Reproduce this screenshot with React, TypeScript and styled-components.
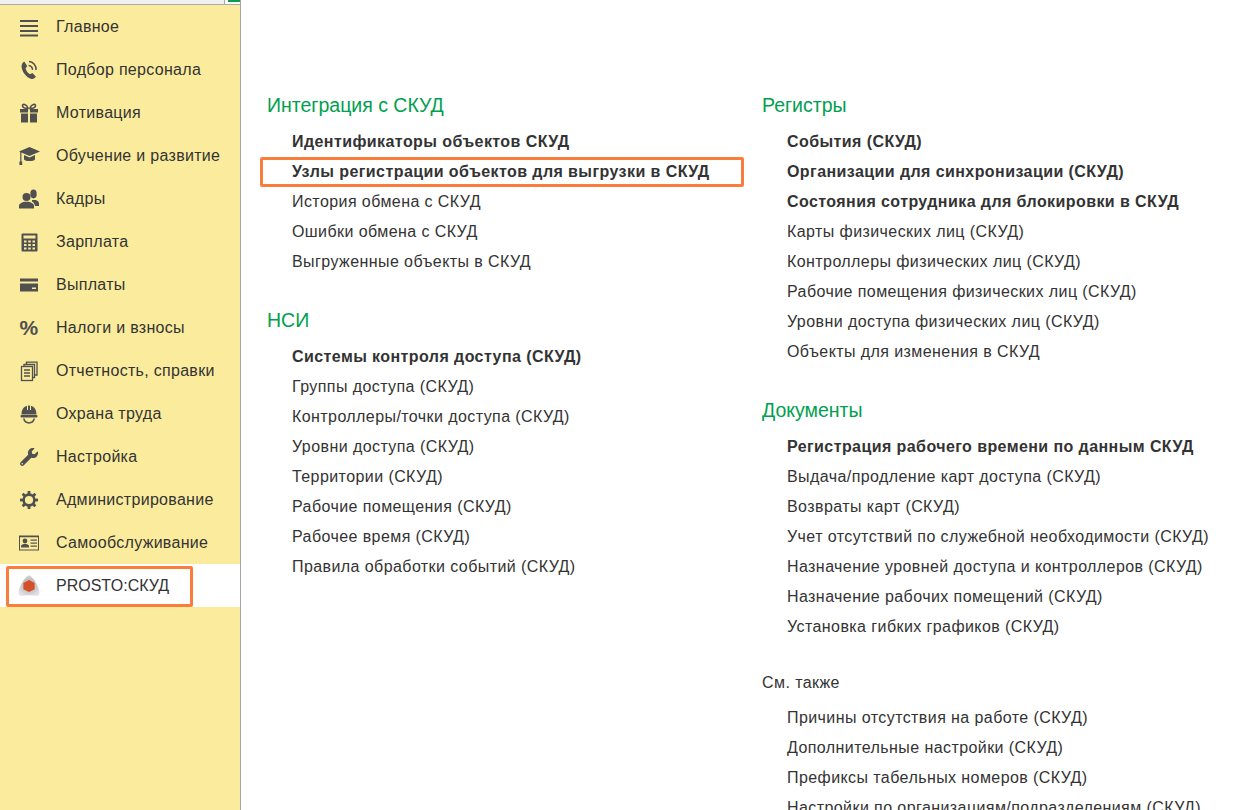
import React from 'react';
import styled, { createGlobalStyle } from 'styled-components';
import { FaWrench } from 'react-icons/fa';

const GlobalStyle = createGlobalStyle`
  html, body {
    margin: 0;
    padding: 0;
    height: 100%;
    overflow: hidden;
    background: #fff;
  }
  body {
    font-family: "Liberation Sans", Arial, sans-serif;
    font-size: 16px;
    color: #333;
  }
`;

const Page = styled.div`
  display: flex;
  width: 1257px;
  height: 810px;
  overflow: hidden;
`;

const Sidebar = styled.nav`
  flex: none;
  width: 240px;
  display: flex;
  flex-direction: column;
  background: #fbec9d;
  border-right: 1px solid #a4a4a4;
`;

const TabStrip = styled.div`
  flex: none;
  height: 4px;
  display: flex;
  border-bottom: 1px solid #a9a9a9;
`;

const TabFill = styled.div`
  flex: 1;
  background: #f0f0f0;
  border-right: 1px solid #a9a9a9;
`;

const TabCorner = styled.div`
  flex: none;
  width: 15px;
  background: #fff;
  display: flex;
  justify-content: flex-end;
`;

const TabMark = styled.div`
  width: 12px;
  height: 2px;
  background: #0d9b4d;
`;

const NavRow = styled.div<{ $active?: boolean }>`
  position: relative;
  height: 43px;
  display: flex;
  align-items: center;
  gap: 15px;
  padding-left: 17px;
  letter-spacing: ${(p) => (p.$active ? 0 : 0.3)}px;
  background: ${(p) => (p.$active ? '#fff' : 'transparent')};
  white-space: nowrap;
`;

const NavIcon = styled.svg`
  flex: none;
  width: 24px;
  height: 24px;
  fill: #505050;
`;

const PackIcon = styled.span`
  flex: none;
  width: 24px;
  height: 24px;
  display: flex;
  align-items: center;
  justify-content: center;
  color: #505050;
  font-size: 18px;
`;

const ActiveFrame = styled.div`
  position: absolute;
  left: 6px;
  top: 2px;
  width: 187px;
  height: 41px;
  box-sizing: border-box;
  border: 3px solid #fb7d3c;
  border-radius: 2px;
`;

const Main = styled.main`
  flex: 1;
  display: flex;
  padding: 90px 0 0 26px;
  min-width: 0;
`;

const Column = styled.div<{ $width: number }>`
  flex: none;
  width: ${(p) => p.$width}px;
`;

const Section = styled.section<{ $tight?: boolean }>`
  margin-bottom: ${(p) => (p.$tight ? 26 : 28)}px;
`;

const SectionTitle = styled.h2`
  margin: 0 0 7px;
  font-size: 19.5px;
  font-weight: 400;
  line-height: 30px;
  color: #00a04f;
`;

const SeeAlsoTitle = styled.h3`
  margin: 0 0 5px;
  font-size: 16px;
  font-weight: 400;
  line-height: 30px;
  letter-spacing: 0.42px;
  color: #333;
`;

const LinkRow = styled.div<{ $bold?: boolean }>`
  position: relative;
  height: 30px;
  line-height: 30px;
  padding-left: 25px;
  letter-spacing: 0.42px;
  font-weight: ${(p) => (p.$bold ? 700 : 400)};
  white-space: nowrap;
`;

const LinkFrame = styled.div`
  position: absolute;
  left: -7px;
  top: 0;
  width: 484px;
  height: 30px;
  box-sizing: border-box;
  border: 3px solid #fb7d3c;
  border-radius: 2px;
`;

type LinkItem = { text: string; bold?: boolean; framed?: boolean };

const MenuIcon = () => (
  <NavIcon viewBox="0 0 24 24">
    <rect x="3" y="5" width="18" height="2" />
    <rect x="3" y="10" width="18" height="2" />
    <rect x="3" y="15" width="18" height="2" />
    <rect x="3" y="19.5" width="18" height="2" />
  </NavIcon>
);

const PhoneIcon = () => (
  <NavIcon viewBox="0 0 24 24">
    <path d="M7.2 3.6 10.2 8 8.6 10.4C9.2 12.8 11 15.2 13 16.2L15.4 15 18.8 18.6C17.8 20.8 15.8 21.6 13.8 20.8 9 19 5.2 14 4.6 9 4.4 6.8 5.4 4.8 7.2 3.6Z" />
    <path d="M12 3.6A7.6 7.6 0 0 1 19 12" fill="none" stroke="#505050" strokeWidth="1.5" />
    <path d="M11.6 7.4A4 4 0 0 1 15.4 11.8" fill="none" stroke="#505050" strokeWidth="1.5" />
  </NavIcon>
);

const GiftIcon = () => (
  <NavIcon viewBox="0 0 24 24">
    <path d="M11 7.5C8 7.5 5.5 6.5 5.5 4.5 5.5 2.5 9.5 3 11 7ZM13 7.5C16 7.5 18.5 6.5 18.5 4.5 18.5 2.5 14.5 3 13 7Z" fill="none" stroke="#505050" strokeWidth="1.6" />
    <rect x="3" y="8" width="8" height="3.5" />
    <rect x="13" y="8" width="8" height="3.5" />
    <rect x="4" y="12.5" width="7" height="9" />
    <rect x="13" y="12.5" width="7" height="9" />
  </NavIcon>
);

const CapIcon = () => (
  <NavIcon viewBox="0 0 24 24">
    <path d="M12.5 3 23 7.5 12.5 12 2 7.5Z" />
    <path d="M7 11 12.5 13.4 18 11V15.5C16.5 17.5 8.5 17.5 7 15.5Z" />
    <rect x="3.2" y="8" width="1.2" height="10" />
    <rect x="2.4" y="17.5" width="2.8" height="3.5" />
  </NavIcon>
);

const PeopleIcon = () => (
  <NavIcon viewBox="0 0 24 24">
    <circle cx="9.5" cy="10" r="4" />
    <path d="M2 21.5V19C2 16.5 5 15.5 7.5 14.8H11.5C14 15.5 17 16.5 17 19V21.5Z" />
    <ellipse cx="16.5" cy="7" rx="3.2" ry="4.4" />
    <path d="M15 13H18.5C20.5 13.6 22 14.8 22 16.5V19H18C17.8 17 16.5 15 15 14.4Z" />
  </NavIcon>
);

const CalculatorIcon = () => (
  <NavIcon viewBox="0 0 24 24">
    <path fillRule="evenodd" d="M5.5 3.5H19.5A1 1 0 0 1 20.5 4.5V20.5A1 1 0 0 1 19.5 21.5H5.5A1 1 0 0 1 4.5 20.5V4.5A1 1 0 0 1 5.5 3.5ZM6.5 5.5V8.5H18.5V5.5ZM7 10.5V12.5H9.5V10.5ZM11.2 10.5V12.5H13.8V10.5ZM15.5 10.5V12.5H18V10.5ZM7 14V16H9.5V14ZM11.2 14V16H13.8V14ZM15.5 14V16H18V14ZM7 17.5V19.5H9.5V17.5ZM11.2 17.5V19.5H13.8V17.5ZM15.5 17.5V19.5H18V17.5Z" />
  </NavIcon>
);

const CardIcon = () => (
  <NavIcon viewBox="0 0 24 24">
    <path fillRule="evenodd" d="M3 5.5H21V8.5H3ZM3 10.5H21V18.5H3ZM15 14.5V16H19V14.5Z" />
  </NavIcon>
);

const PercentIcon = () => (
  <NavIcon viewBox="0 0 24 24">
    <text x="12" y="19" textAnchor="middle" fontSize="21" fontWeight="700" fontFamily="Liberation Sans, sans-serif">%</text>
  </NavIcon>
);

const PagesIcon = () => (
  <NavIcon viewBox="0 0 24 24">
    <g fill="none" stroke="#505050" strokeWidth="1.3">
      <rect x="4.5" y="7.5" width="11" height="14" />
      <path d="M7 7V5.5H17.5V18.5H16" />
      <path d="M9.5 5V3.2H20V16H18" />
      <path d="M7 11H13M7 14H13M7 17H13" />
    </g>
  </NavIcon>
);

const HelmetIcon = () => (
  <NavIcon viewBox="0 0 24 24">
    <path d="M4.5 12.5C4.5 7.5 7 4.6 10 3.8V8H11V3.4H13V8H14V3.8C17 4.6 19.5 7.5 19.5 12.5Z" />
    <rect x="3.5" y="13" width="17" height="2.6" rx="1" />
    <path d="M6 16.6C6.5 20 9 21.8 12 21.8 15 21.8 17.5 20 18 16.6H16.4C16 18.8 14.2 20.2 12 20.2 9.8 20.2 8 18.8 7.6 16.6Z" />
  </NavIcon>
);

const gearTeeth = [0, 45, 90, 135, 180, 225, 270, 315];

const GearIcon = () => (
  <NavIcon viewBox="0 0 24 24">
    <circle cx="12" cy="12" r="5.4" fill="none" stroke="#505050" strokeWidth="2.6" />
    {gearTeeth.map((angle) => (
      <rect key={angle} x="10.6" y="3" width="2.8" height="3.6" transform={`rotate(${angle} 12 12)`} />
    ))}
  </NavIcon>
);

const BadgeIcon = () => (
  <NavIcon viewBox="0 0 24 24">
    <path fillRule="evenodd" d="M2 4.5H22V19.5H2ZM3 6.2V18.5H21V6.2Z" />
    <circle cx="8" cy="10" r="2.4" />
    <path d="M4 16.5V15C4 13.6 6.5 13 8 13 9.5 13 12 13.6 12 15V16.5Z" />
    <rect x="13.5" y="8.5" width="6.5" height="1.2" />
    <rect x="13.5" y="11.5" width="6.5" height="1.2" />
    <rect x="13.5" y="14.5" width="6.5" height="1.2" />
  </NavIcon>
);

const ProstoIcon = () => (
  <NavIcon viewBox="0 0 24 24">
    <defs>
      <radialGradient id="prostoShell" cx="0.5" cy="0.45" r="0.6">
        <stop offset="0.4" stopColor="#bdbdbd" />
        <stop offset="1" stopColor="#e4e4e4" />
      </radialGradient>
      <filter id="prostoSoft">
        <feGaussianBlur stdDeviation="0.3" />
      </filter>
    </defs>
    <path d="M12 1.5C15 1.5 20.5 9.5 22.5 17.5 23 20.5 21.5 22 19.5 22 15 21 9 21 4.5 22 2.5 22 1 20.5 1.5 17.5 3.5 9.5 9 1.5 12 1.5Z" fill="url(#prostoShell)" filter="url(#prostoSoft)" />
    <path d="M12 6 17.6 9V15.2L12 18 6.4 15.2V9Z" fill="#d5502a" filter="url(#prostoSoft)" />
  </NavIcon>
);

const PackWrench = () => (
  <PackIcon>
    <FaWrench />
  </PackIcon>
);

const navItems: { label: string; Icon: React.ComponentType }[] = [
  { label: 'Главное', Icon: MenuIcon },
  { label: 'Подбор персонала', Icon: PhoneIcon },
  { label: 'Мотивация', Icon: GiftIcon },
  { label: 'Обучение и развитие', Icon: CapIcon },
  { label: 'Кадры', Icon: PeopleIcon },
  { label: 'Зарплата', Icon: CalculatorIcon },
  { label: 'Выплаты', Icon: CardIcon },
  { label: 'Налоги и взносы', Icon: PercentIcon },
  { label: 'Отчетность, справки', Icon: PagesIcon },
  { label: 'Охрана труда', Icon: HelmetIcon },
  { label: 'Настройка', Icon: PackWrench },
  { label: 'Администрирование', Icon: GearIcon },
  { label: 'Самообслуживание', Icon: BadgeIcon },
];

const integration: LinkItem[] = [
  { text: 'Идентификаторы объектов СКУД', bold: true },
  { text: 'Узлы регистрации объектов для выгрузки в СКУД', bold: true, framed: true },
  { text: 'История обмена с СКУД' },
  { text: 'Ошибки обмена с СКУД' },
  { text: 'Выгруженные объекты в СКУД' },
];

const nsi: LinkItem[] = [
  { text: 'Системы контроля доступа (СКУД)', bold: true },
  { text: 'Группы доступа (СКУД)' },
  { text: 'Контроллеры/точки доступа (СКУД)' },
  { text: 'Уровни доступа (СКУД)' },
  { text: 'Территории (СКУД)' },
  { text: 'Рабочие помещения (СКУД)' },
  { text: 'Рабочее время (СКУД)' },
  { text: 'Правила обработки событий (СКУД)' },
];

const registers: LinkItem[] = [
  { text: 'События (СКУД)', bold: true },
  { text: 'Организации для синхронизации (СКУД)', bold: true },
  { text: 'Состояния сотрудника для блокировки в СКУД', bold: true },
  { text: 'Карты физических лиц (СКУД)' },
  { text: 'Контроллеры физических лиц (СКУД)' },
  { text: 'Рабочие помещения физических лиц (СКУД)' },
  { text: 'Уровни доступа физических лиц (СКУД)' },
  { text: 'Объекты для изменения в СКУД' },
];

const documents: LinkItem[] = [
  { text: 'Регистрация рабочего времени по данным СКУД', bold: true },
  { text: 'Выдача/продление карт доступа (СКУД)' },
  { text: 'Возвраты карт (СКУД)' },
  { text: 'Учет отсутствий по служебной необходимости (СКУД)' },
  { text: 'Назначение уровней доступа и контроллеров (СКУД)' },
  { text: 'Назначение рабочих помещений (СКУД)' },
  { text: 'Установка гибких графиков (СКУД)' },
];

const seeAlso: LinkItem[] = [
  { text: 'Причины отсутствия на работе (СКУД)' },
  { text: 'Дополнительные настройки (СКУД)' },
  { text: 'Префиксы табельных номеров (СКУД)' },
  { text: 'Настройки по организациям/подразделениям (СКУД)' },
];

function Links({ items }: { items: LinkItem[] }) {
  return (
    <>
      {items.map((item) => (
        <LinkRow key={item.text} $bold={item.bold}>
          {item.text}
          {item.framed && <LinkFrame />}
        </LinkRow>
      ))}
    </>
  );
}

export default function App() {
  return (
    <Page>
      <GlobalStyle />
      <Sidebar>
        <TabStrip>
          <TabFill />
          <TabCorner>
            <TabMark />
          </TabCorner>
        </TabStrip>
        {navItems.map(({ label, Icon }) => (
          <NavRow key={label}>
            <Icon />
            {label}
          </NavRow>
        ))}
        <NavRow $active>
          <ProstoIcon />
          PROSTO:СКУД
          <ActiveFrame />
        </NavRow>
      </Sidebar>
      <Main>
        <Column $width={495}>
          <Section>
            <SectionTitle>Интеграция с СКУД</SectionTitle>
            <Links items={integration} />
          </Section>
          <Section>
            <SectionTitle>НСИ</SectionTitle>
            <Links items={nsi} />
          </Section>
        </Column>
        <Column $width={495}>
          <Section>
            <SectionTitle>Регистры</SectionTitle>
            <Links items={registers} />
          </Section>
          <Section $tight>
            <SectionTitle>Документы</SectionTitle>
            <Links items={documents} />
          </Section>
          <SeeAlsoTitle>См. также</SeeAlsoTitle>
          <Links items={seeAlso} />
        </Column>
      </Main>
    </Page>
  );
}
